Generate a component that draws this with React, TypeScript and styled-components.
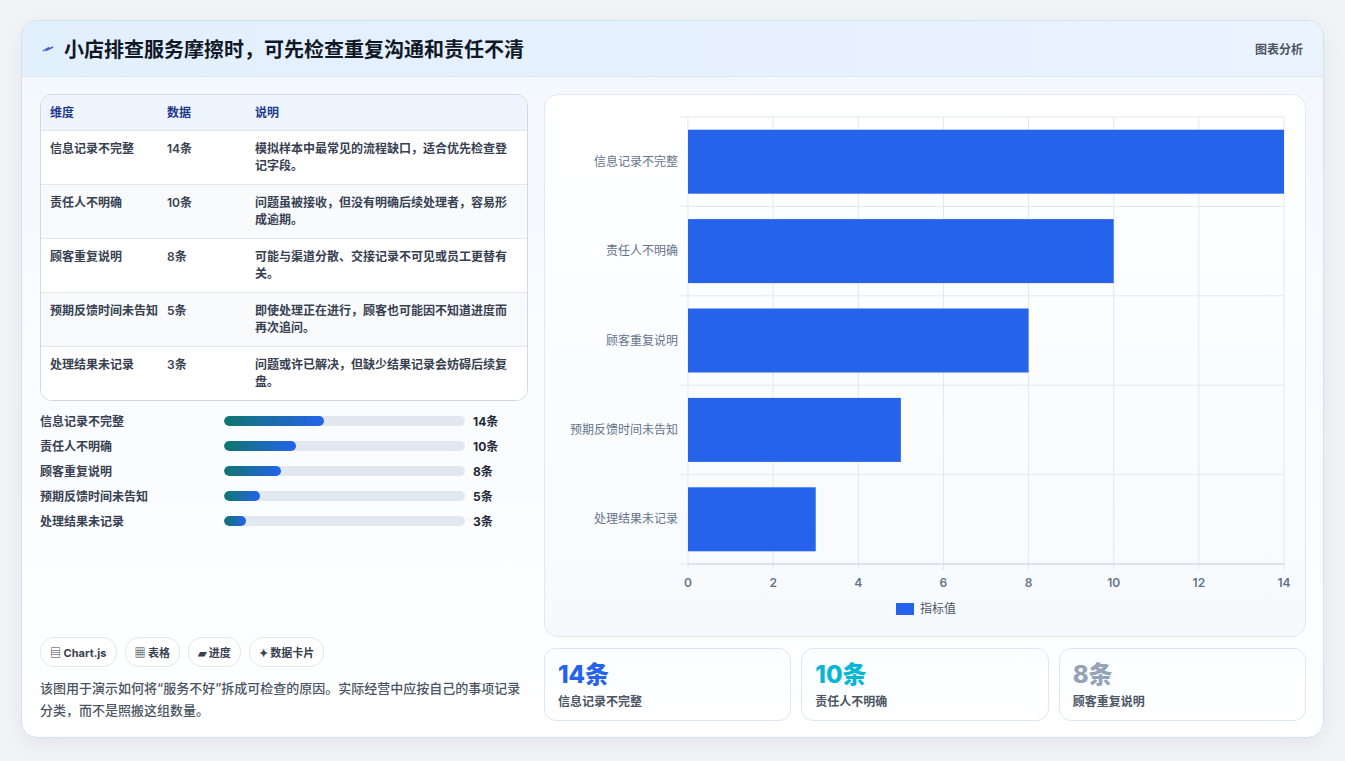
import React from 'react';
import styled, { createGlobalStyle } from 'styled-components';

const Global = createGlobalStyle`
  body { margin: 0; background: #f1f3f6; font-family: Inter, "Noto Sans CJK SC", sans-serif; }
`;

const rows = [
  { name: '信息记录不完整', value: 14, note: '模拟样本中最常见的流程缺口，适合优先检查登记字段。' },
  { name: '责任人不明确', value: 10, note: '问题虽被接收，但没有明确后续处理者，容易形成逾期。' },
  { name: '顾客重复说明', value: 8, note: '可能与渠道分散、交接记录不可见或员工更替有关。' },
  { name: '预期反馈时间未告知', value: 5, note: '即使处理正在进行，顾客也可能因不知道进度而再次追问。' },
  { name: '处理结果未记录', value: 3, note: '问题或许已解决，但缺少结果记录会妨碍后续复盘。' },
];

const Page = styled.div`
  padding: 20px 21px 21px 21px;
`;

const Card = styled.div`
  height: 718px;
  box-sizing: border-box;
  border: 1px solid #cfe3f3;
  border-radius: 16px;
  background: linear-gradient(180deg, #f3f8fe 0%, #ffffff 100%);
  box-shadow: 0 6px 20px rgba(0, 0, 0, 0.06);
  overflow: hidden;
  display: flex;
  flex-direction: column;
`;

const Header = styled.div`
  height: 55px;
  flex-shrink: 0;
  display: flex;
  align-items: center;
  justify-content: space-between;
  padding: 0 20px;
  background: linear-gradient(90deg, #e2effd, #eaf3fe);
  border-bottom: 1px solid #d8e6f4;
`;

const Title = styled.h1`
  margin: 0;
  font-size: 20px;
  font-weight: 700;
  color: #111827;
  display: flex;
  align-items: center;
  gap: 10px;
`;

const Tag = styled.span`
  font-size: 12px;
  font-weight: 600;
  color: #4b5563;
`;

const Body = styled.div`
  flex: 1;
  display: grid;
  grid-template-columns: 488px 762px;
  gap: 16px;
  padding: 17px 18px 18px 18px;
`;

const Left = styled.div`
  display: flex;
  flex-direction: column;
`;

const Table = styled.div`
  border: 1px solid #cfd8e3;
  border-radius: 12px;
  overflow: hidden;
  background: #fff;
`;

const TRow = styled.div<{ $head?: boolean; $alt?: boolean }>`
  display: grid;
  grid-template-columns: 117px 88px 1fr;
  padding: ${p => (p.$head ? '9px 9px' : '9px 9px 8px 9px')};
  min-height: ${p => (p.$head ? '15px' : '36px')};
  font-size: 12px;
  line-height: 17px;
  color: ${p => (p.$head ? '#1e3a8a' : '#374151')};
  font-weight: 600;
  background: ${p => (p.$head ? '#eef5fe' : p.$alt ? '#f8fafc' : '#fff')};
  border-top: ${p => (p.$head ? 'none' : '1px solid #e2e8f0')};
`;

const Bars = styled.div`
  margin-top: 11px;
  display: flex;
  flex-direction: column;
  gap: 8px;
`;

const BarRow = styled.div`
  display: grid;
  grid-template-columns: 176px 241px 1fr;
  gap: 8px;
  align-items: center;
  font-size: 12px;
  font-weight: 600;
  color: #374151;
  height: 17px;
`;

const Track = styled.div`
  height: 10px;
  border-radius: 5px;
  background: #e2e8f0;
  overflow: hidden;
`;

const Fill = styled.div`
  height: 100%;
  border-radius: 5px;
  background: linear-gradient(90deg, #0f766e, #2563eb);
`;

const BarVal = styled.span`
  color: #1f2937;
  font-weight: 700;
`;

const Spacer = styled.div`
  flex: 1;
`;

const Chips = styled.div`
  display: flex;
  gap: 8px;
`;

const Chip = styled.span`
  font-size: 11px;
  font-weight: 700;
  color: #374151;
  padding: 6px 9px;
  border: 1px solid #e2e8f0;
  border-radius: 14px;
  background: #fff;
`;

const Note = styled.p`
  margin: 10px 0 0;
  font-size: 13px;
  line-height: 22px;
  color: #4b5563;
  font-weight: 500;
`;

const Right = styled.div`
  display: flex;
  flex-direction: column;
  gap: 11px;
`;

const ChartPanel = styled.div`
  height: 543px;
  box-sizing: border-box;
  border: 1px solid #e2e8f0;
  border-radius: 14px;
  background: linear-gradient(180deg, #ffffff, #f7fafd);
`;

const Stats = styled.div`
  display: grid;
  grid-template-columns: repeat(3, 1fr);
  gap: 10px;
`;

const Stat = styled.div`
  height: 73px;
  box-sizing: border-box;
  border: 1px solid #dbe7f5;
  border-radius: 12px;
  background: linear-gradient(180deg, #fbfdff, #ffffff);
  padding: 11px 13px;
`;

const StatNum = styled.div<{ $c: string }>`
  font-size: 24px;
  font-weight: 800;
  line-height: 30px;
  color: ${p => p.$c};
`;

const StatLabel = styled.div`
  font-size: 12px;
  font-weight: 600;
  color: #4b5563;
  margin-top: 2px;
`;

const Chart = () => {
  const x0 = 143, x1 = 739, y0 = 22, y1 = 469;
  const sx = (v: number) => x0 + ((x1 - x0) * v) / 14;
  const band = (y1 - y0) / 5;
  return (
    <svg width="760" height="541" style={{ display: 'block' }}>
      {[0, 2, 4, 6, 8, 10, 12, 14].map(t => (
        <g key={t}>
          <line x1={sx(t)} x2={sx(t)} y1={y0} y2={y1 + 6} stroke="#e5e7eb" />
          <text x={sx(t)} y={y1 + 23} textAnchor="middle" fontSize="12" fontWeight="600" fill="#64748b" fontFamily="Inter, sans-serif">{t}</text>
        </g>
      ))}
      {[0, 1, 2, 3, 4, 5].map(i => (
        <line key={i} x1={x0 - 8} x2={x1} y1={y0 + band * i} y2={y0 + band * i} stroke="#e5e7eb" />
      ))}
      <line x1={x0} x2={x1} y1={y1} y2={y1} stroke="#cbd5e1" />
      {rows.map((r, i) => (
        <g key={r.name}>
          <rect x={x0} y={y0 + band * i + 12.7} width={sx(r.value) - x0} height={64} fill="#2563eb" />
          <text x={x0 - 10} y={y0 + band * i + band / 2 + 4} textAnchor="end" fontSize="12" fill="#64748b" fontFamily="'Noto Sans CJK SC', sans-serif">{r.name}</text>
        </g>
      ))}
      <rect x={351} y={508} width={18} height={12} fill="#2563eb" />
      <text x={375} y={518} fontSize="12" fill="#4b5563" fontFamily="'Noto Sans CJK SC', sans-serif">指标值</text>
    </svg>
  );
};

export default function App() {
  return (
    <Page>
      <Global />
      <Card>
        <Header>
          <Title>
            <svg width="12" height="12" viewBox="0 0 12 12">
              <path d="M1 8 L6 5 L5 7 L11 4" stroke="#3b5bdb" strokeWidth="1.4" fill="none" />
            </svg>
            小店排查服务摩擦时，可先检查重复沟通和责任不清
          </Title>
          <Tag>图表分析</Tag>
        </Header>
        <Body>
          <Left>
            <Table>
              <TRow $head>
                <span>维度</span><span>数据</span><span>说明</span>
              </TRow>
              {rows.map((r, i) => (
                <TRow key={r.name} $alt={i % 2 === 1}>
                  <span>{r.name}</span>
                  <span>{r.value}条</span>
                  <span>{r.note}</span>
                </TRow>
              ))}
            </Table>
            <Bars>
              {rows.map(r => (
                <BarRow key={r.name}>
                  <span>{r.name}</span>
                  <Track>
                    <Fill style={{ width: `${(r.value / 14) * 41.7}%` }} />
                  </Track>
                  <BarVal>{r.value}条</BarVal>
                </BarRow>
              ))}
            </Bars>
            <Spacer />
            <Chips>
              <Chip>▤ Chart.js</Chip>
              <Chip>▦ 表格</Chip>
              <Chip>▰ 进度</Chip>
              <Chip>✦ 数据卡片</Chip>
            </Chips>
            <Note>该图用于演示如何将“服务不好”拆成可检查的原因。实际经营中应按自己的事项记录分类，而不是照搬这组数量。</Note>
          </Left>
          <Right>
            <ChartPanel>
              <Chart />
            </ChartPanel>
            <Stats>
              <Stat>
                <StatNum $c="#2563eb">14条</StatNum>
                <StatLabel>信息记录不完整</StatLabel>
              </Stat>
              <Stat>
                <StatNum $c="#06b6d4">10条</StatNum>
                <StatLabel>责任人不明确</StatLabel>
              </Stat>
              <Stat>
                <StatNum $c="#94a3b8">8条</StatNum>
                <StatLabel>顾客重复说明</StatLabel>
              </Stat>
            </Stats>
          </Right>
        </Body>
      </Card>
    </Page>
  );
}
